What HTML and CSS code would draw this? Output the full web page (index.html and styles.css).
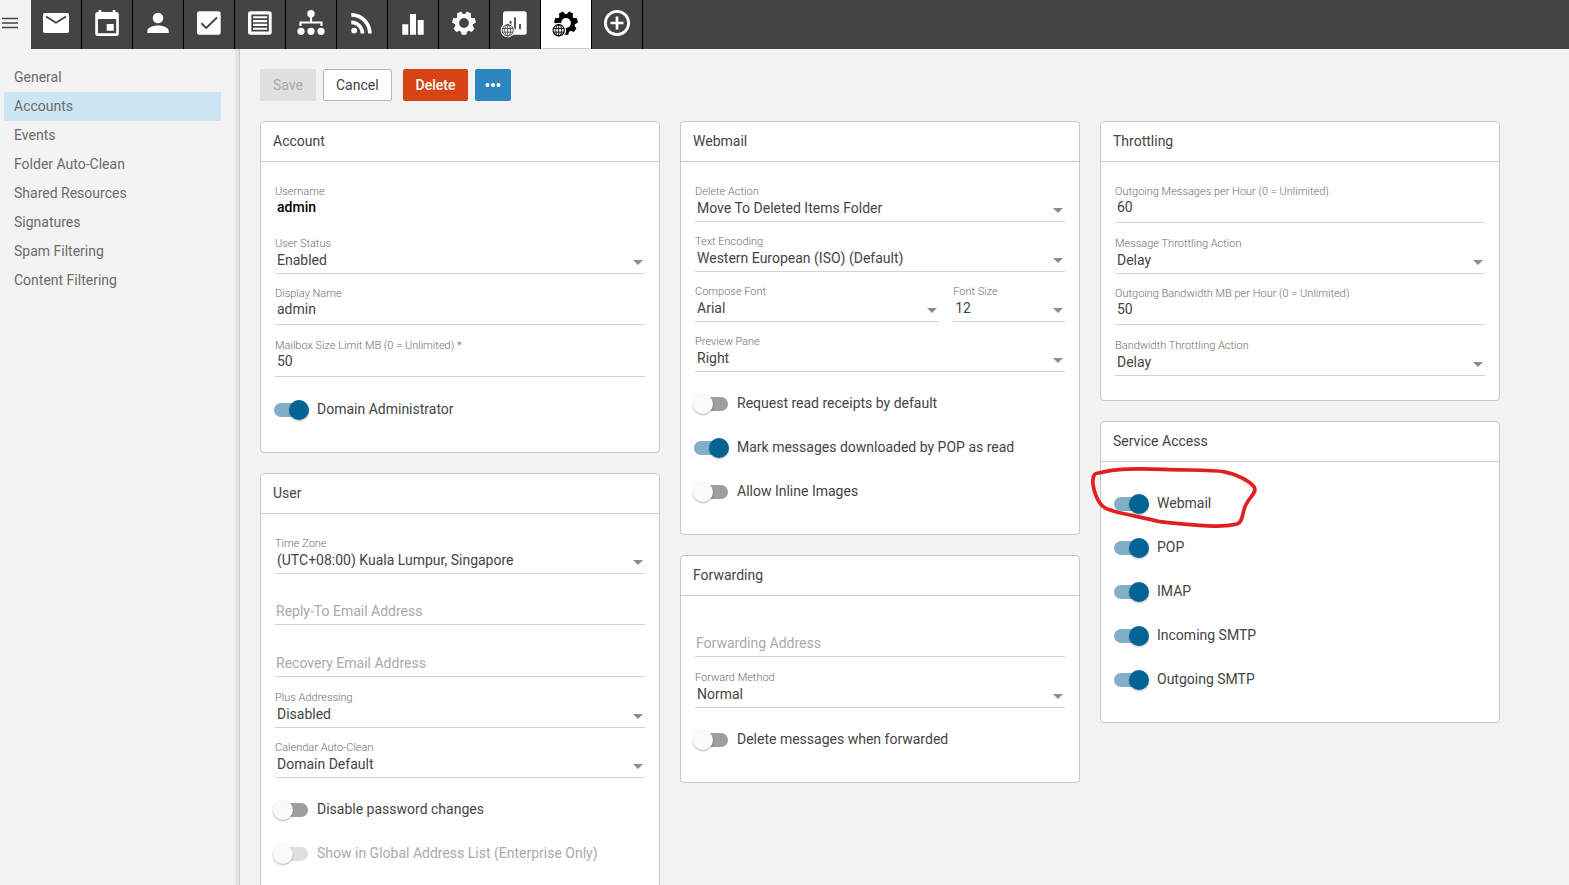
FILE: index.html
```
<!DOCTYPE html>
<html lang="en">
<head>
<meta charset="utf-8">
<title>Accounts - admin</title>
<link rel="stylesheet" href="styles.css">
</head>
<body>
<header class="topbar">
  <button class="menu-button" type="button" aria-label="Menu"><svg class="menu-icon" viewBox="0 0 16 12"><path d="M0 1.500h16M0 6h16M0 10.500h16" stroke="#444" stroke-width="1.500"/></svg></button>
  <nav class="tabs" aria-label="Sections">
    <a class="tab" href="#" aria-label="Email"><svg viewBox="0 0 50 49"><rect x="12" y="13" width="26" height="20" rx="2"/><path class="cut" d="M15 16.500l10 6.200 10-6.200" stroke-width="1.800"/></svg></a>
    <a class="tab" href="#" aria-label="Calendar"><svg viewBox="0 0 50 49"><path fill-rule="evenodd" d="M16.700 10h2.600v2h11.400v-2h2.600v2H34.500a2.300 2.300 0 0 1 2.300 2.300v19.400a2.300 2.300 0 0 1-2.300 2.300h-19a2.300 2.300 0 0 1-2.300-2.300V14.300a2.300 2.300 0 0 1 2.300-2.300h1.200zM16 19v14.300h18.200V19z"/><rect x="24.700" y="24" width="7" height="6.700"/></svg></a>
    <a class="tab" href="#" aria-label="Contacts"><svg viewBox="0 0 50 49"><circle cx="25" cy="18" r="5.300"/><path d="M14.300 33v-2.300c0-3.400 7-5.200 10.700-5.200s10.700 1.800 10.700 5.200V33z"/></svg></a>
    <a class="tab" href="#" aria-label="Tasks"><svg viewBox="0 0 50 49"><rect x="13" y="11.300" width="23.700" height="23.400" rx="2.500"/><path class="cut" d="M17.300 23.300l4.900 4.700 10.800-10.500" stroke-width="1.900"/></svg></a>
    <a class="tab" href="#" aria-label="Notes"><svg viewBox="0 0 50 49"><rect x="13" y="11.300" width="23.700" height="23.400" rx="2.500"/><path class="cut" d="M17.200 15.300h15.800v15.400H17.200zM17 19.200h16M17 23h16M17 26.800h16" stroke-width="1.700"/></svg></a>
    <a class="tab" href="#" aria-label="Domain"><svg viewBox="0 0 50 49"><circle cx="25" cy="13.700" r="3.700"/><circle cx="15" cy="31.300" r="3.600"/><circle cx="25" cy="31.300" r="3.600"/><circle cx="35" cy="31.300" r="3.600"/><path class="line" d="M25 16v6.500M14.500 26v-3.500h21V26" stroke-width="2.200"/></svg></a>
    <a class="tab" href="#" aria-label="RSS feeds"><svg viewBox="0 0 50 49"><g transform="translate(9 7.100) scale(1.320)"><circle cx="6.180" cy="17.820" r="2.180"/><path d="M4 4.440v2.830c7.030 0 12.730 5.700 12.730 12.730h2.830c0-8.590-6.970-15.560-15.560-15.560zm0 5.660v2.830c3.900 0 7.070 3.170 7.070 7.070h2.830c0-5.470-4.430-9.900-9.900-9.900z"/></g></svg></a>
    <a class="tab" href="#" aria-label="Reports"><svg viewBox="0 0 50 49"><path d="M14.300 24.300h6v10.400h-6zM22 14h6v20.700h-6zM29.700 20h6v14.700h-6z"/></svg></a>
    <a class="tab" href="#" aria-label="Settings"><svg viewBox="0 0 50 49"><g transform="translate(25 23)"><circle class="line" r="7" stroke-width="4.200"/><g id="teeth"><path id="tooth" d="M-3.300-8l1.100-3.700h4.400l1.100 3.700z" transform="rotate(180)"/><use href="#tooth" transform="rotate(51.430)"/><use href="#tooth" transform="rotate(102.860)"/><use href="#tooth" transform="rotate(154.290)"/><use href="#tooth" transform="rotate(205.710)"/><use href="#tooth" transform="rotate(257.140)"/><use href="#tooth" transform="rotate(308.570)"/></g></g></svg></a>
    <a class="tab" href="#" aria-label="Domain reports"><svg viewBox="0 0 50 49"><rect x="13" y="11.300" width="23.700" height="23.400" rx="2.500"/><path class="cut" d="M20.500 21v9M25 17.300v12M30 24v5.300" stroke-width="1.800"/><circle cx="17.700" cy="30.300" r="7"/><circle class="cut" cx="17.700" cy="30.300" r="5.600" stroke-width="1"/><path class="cut" d="M17.700 24.700v11.200M12.500 28.500h10.400M12.500 32.200h10.400" stroke-width="0.900"/><ellipse class="cut" cx="17.700" cy="30.300" rx="2.900" ry="5.600" stroke-width="0.900"/></svg></a>
    <a class="tab tab-active" href="#" aria-label="Domain settings" aria-current="page"><svg viewBox="0 0 50 49"><g transform="translate(25 23)"><circle class="line" r="7" stroke-width="4.200"/><use href="#teeth"/></g><circle class="halo" cx="17.700" cy="30.300" r="7.500"/><circle class="line" cx="17.700" cy="30.300" r="5.600" stroke-width="1.200"/><path class="line" d="M17.700 24.700v11.200M12.500 28.500h10.400M12.500 32.200h10.400" stroke-width="0.900"/><ellipse class="line" cx="17.700" cy="30.300" rx="2.900" ry="5.600" stroke-width="0.900"/></svg></a>
    <a class="tab" href="#" aria-label="New"><svg viewBox="0 0 50 49"><circle class="line" cx="25" cy="23" r="11.600" stroke-width="2.800"/><path class="line" d="M18.500 23h13M25 16.500v13" stroke-width="2.700"/></svg></a>
  </nav>
</header>
<div class="shell">
  <nav class="sidebar" aria-label="Settings pages">
    <a class="side-link" href="#">General</a>
    <a class="side-link side-link-active" href="#" aria-current="page">Accounts</a>
    <a class="side-link" href="#">Events</a>
    <a class="side-link" href="#">Folder Auto-Clean</a>
    <a class="side-link" href="#">Shared Resources</a>
    <a class="side-link" href="#">Signatures</a>
    <a class="side-link" href="#">Spam Filtering</a>
    <a class="side-link" href="#">Content Filtering</a>
  </nav>
  <main class="content">
    <div class="actions">
      <button class="button button-save" type="button" disabled>Save</button>
      <button class="button button-cancel" type="button">Cancel</button>
      <button class="button button-delete" type="button">Delete</button>
      <button class="button button-more" type="button" aria-label="More actions"><svg class="more-icon" viewBox="0 0 16 4"><circle cx="2.500" cy="2" r="2"/><circle cx="8" cy="2" r="2"/><circle cx="13.500" cy="2" r="2"/></svg></button>
    </div>
    <div class="columns">
      <div class="column">
        <section class="card">
          <h2 class="card-title">Account</h2>
          <div class="card-body">
            <div class="field field-text"><span class="label">Username</span><strong class="value">admin</strong></div>
            <div class="field"><label class="label" for="status">User Status</label><div class="picker"><select id="status"><option>Enabled</option></select></div></div>
            <div class="field field-text"><label class="label" for="display">Display Name</label><input class="value" id="display" type="text" value="admin"></div>
            <div class="field field-text"><label class="label" for="mailbox">Mailbox Size Limit MB (0 = Unlimited) *</label><input class="value" id="mailbox" type="text" value="50"></div>
            <div class="toggles">
              <label class="toggle"><input type="checkbox" checked><span>Domain Administrator</span></label>
            </div>
          </div>
        </section>
        <section class="card">
          <h2 class="card-title">User</h2>
          <div class="card-body">
            <div class="field"><label class="label" for="zone">Time Zone</label><div class="picker"><select id="zone"><option>(UTC+08:00) Kuala Lumpur, Singapore</option></select></div></div>
            <div class="field field-text field-empty"><input class="value" type="email" aria-label="Reply-To Email Address" placeholder="Reply-To Email Address"></div>
            <div class="field field-text field-empty"><input class="value" type="email" aria-label="Recovery Email Address" placeholder="Recovery Email Address"></div>
            <div class="field"><label class="label" for="plus">Plus Addressing</label><div class="picker"><select id="plus"><option>Disabled</option></select></div></div>
            <div class="field"><label class="label" for="clean">Calendar Auto-Clean</label><div class="picker"><select id="clean"><option>Domain Default</option></select></div></div>
            <div class="toggles">
              <label class="toggle"><input type="checkbox"><span>Disable password changes</span></label>
              <label class="toggle toggle-disabled"><input type="checkbox" disabled><span>Show in Global Address List (Enterprise Only)</span></label>
            </div>
          </div>
        </section>
      </div>
      <div class="column">
        <section class="card">
          <h2 class="card-title">Webmail</h2>
          <div class="card-body">
            <div class="field"><label class="label" for="delaction">Delete Action</label><div class="picker"><select id="delaction"><option>Move To Deleted Items Folder</option></select></div></div>
            <div class="field"><label class="label" for="encoding">Text Encoding</label><div class="picker"><select id="encoding"><option>Western European (ISO) (Default)</option></select></div></div>
            <div class="field-pair">
              <div class="field"><label class="label" for="font">Compose Font</label><div class="picker"><select id="font"><option>Arial</option></select></div></div>
              <div class="field"><label class="label" for="size">Font Size</label><div class="picker"><select id="size"><option>12</option></select></div></div>
            </div>
            <div class="field"><label class="label" for="pane">Preview Pane</label><div class="picker"><select id="pane"><option>Right</option></select></div></div>
            <div class="toggles">
              <label class="toggle"><input type="checkbox"><span>Request read receipts by default</span></label>
              <label class="toggle"><input type="checkbox" checked><span>Mark messages downloaded by POP as read</span></label>
              <label class="toggle"><input type="checkbox"><span>Allow Inline Images</span></label>
            </div>
          </div>
        </section>
        <section class="card">
          <h2 class="card-title">Forwarding</h2>
          <div class="card-body">
            <div class="field field-text field-empty"><input class="value" type="email" aria-label="Forwarding Address" placeholder="Forwarding Address"></div>
            <div class="field"><label class="label" for="method">Forward Method</label><div class="picker"><select id="method"><option>Normal</option></select></div></div>
            <div class="toggles">
              <label class="toggle"><input type="checkbox"><span>Delete messages when forwarded</span></label>
            </div>
          </div>
        </section>
      </div>
      <div class="column">
        <section class="card">
          <h2 class="card-title">Throttling</h2>
          <div class="card-body">
            <div class="field field-text"><label class="label" for="msgs">Outgoing Messages per Hour (0 = Unlimited)</label><input class="value" id="msgs" type="text" value="60"></div>
            <div class="field"><label class="label" for="msgact">Message Throttling Action</label><div class="picker"><select id="msgact"><option>Delay</option></select></div></div>
            <div class="field field-text"><label class="label" for="band">Outgoing Bandwidth MB per Hour (0 = Unlimited)</label><input class="value" id="band" type="text" value="50"></div>
            <div class="field"><label class="label" for="bandact">Bandwidth Throttling Action</label><div class="picker"><select id="bandact"><option>Delay</option></select></div></div>
          </div>
        </section>
        <section class="card">
          <h2 class="card-title">Service Access</h2>
          <div class="card-body">
            <div class="toggles">
              <label class="toggle"><input type="checkbox" checked><span>Webmail</span><svg class="scribble" viewBox="30 165 510 195" aria-hidden="true"><path d="M62 188C100 176 180 175 250 178C320 181 400 179 430 185C465 191 510 212 523 232C532 248 506 262 495 290C486 315 488 335 473 341C450 348 400 350 370 347C330 344 280 340 240 335C200 325 150 316 110 306C75 297 62 290 50 262C38 235 35 207 43 194C46 189 52 190 62 188"/></svg></label>
              <label class="toggle"><input type="checkbox" checked><span>POP</span></label>
              <label class="toggle"><input type="checkbox" checked><span>IMAP</span></label>
              <label class="toggle"><input type="checkbox" checked><span>Incoming SMTP</span></label>
              <label class="toggle"><input type="checkbox" checked><span>Outgoing SMTP</span></label>
            </div>
          </div>
        </section>
      </div>
    </div>
  </main>
</div>
</body>
</html>
```
FILE: styles.css
```
* {
  box-sizing: border-box;
}

body {
  margin: 0;
  height: 100vh;
  display: flex;
  flex-direction: column;
  overflow: hidden;
  background: #f3f3f3;
  color: #444;
  font-family: Roboto, "Liberation Sans", sans-serif;
  font-size: 14px;
  line-height: 20px;
}

button,
input,
select {
  margin: 0;
  font: inherit;
  color: inherit;
}

/* Top bar */
.topbar {
  display: flex;
  flex: none;
  background: #444;
}

.menu-button {
  display: flex;
  align-items: center;
  width: 31px;
  padding: 0 0 3px 2px;
  border: 0;
  background: #f3f3f3;
}

.menu-icon {
  width: 16px;
  height: 12px;
}

.tabs {
  display: flex;
}

.tab {
  width: 51px;
  height: 49px;
  border-right: 1px solid #000;
  color: #fff;
}

.tab svg {
  display: block;
  width: 50px;
  height: 49px;
  fill: currentColor;
}

.tab-active {
  background: #fff;
  color: #000;
  box-shadow: inset 0 -1px #ccc;
}

.tab .cut {
  fill: none;
  stroke: #444;
}

.tab .line {
  fill: none;
  stroke: currentColor;
}

.tab .halo {
  fill: #fff;
}

/* Sidebar */
.shell {
  display: flex;
  flex: 1;
  min-height: 0;
}

.sidebar {
  flex: none;
  width: 240px;
  padding: 14px 18px 0 4px;
  border-right: 1px solid #ccc;
  box-shadow: inset -4px 0 #e4e4e4;
}

.side-link {
  display: block;
  padding: 4px 10px 5px;
  color: #6b6b6b;
  text-decoration: none;
}

.side-link-active {
  background: #cde6f3;
}

/* Content */
.content {
  flex: 1;
  min-width: 0;
  padding: 20px 69px 20px 20px;
  overflow-y: auto;
  scrollbar-width: none;
}

.actions {
  display: flex;
  gap: 7px;
  margin-bottom: 20px;
}

.button {
  height: 32px;
  padding: 0 12px;
  border: 1px solid transparent;
  border-radius: 2px;
}

.button-save {
  background: #e0e0e0;
  color: #aaa;
}

.button-cancel {
  margin-right: 4px;
  background: #fff;
  border-color: #b5b5b5;
}

.button-delete {
  background: #d84315;
  color: #fff;
  font-weight: 500;
}

.button-more {
  display: flex;
  align-items: center;
  padding: 0 9px;
  background: #2e86c1;
}

.more-icon {
  width: 16px;
  height: 4px;
  fill: #fff;
}

.columns {
  display: grid;
  grid-template-columns: repeat(3, minmax(0, 1fr));
  gap: 20px;
  align-items: start;
}

.column {
  display: flex;
  flex-direction: column;
  gap: 20px;
}

.card {
  border: 1px solid #c8c8c8;
  border-radius: 4px;
  background: #fff;
}

.card-title {
  margin: 0;
  padding: 9px 12px 10px;
  border-bottom: 1px solid #c8c8c8;
  font-size: 14px;
  font-weight: 400;
}

.card-body {
  padding: 22px 12px 12px;
}

/* Fields */
.field {
  margin: 0 2px 12px;
}

.label {
  display: block;
  padding-top: 2px;
  color: #6e6e6e;
  font-size: 11px;
  font-weight: 300;
  line-height: 12px;
}

.picker {
  display: grid;
  align-items: center;
  border-bottom: 1px solid #d4d4d4;
}

.picker select {
  grid-area: 1 / 1;
  width: 100%;
  height: 23px;
  padding: 0 20px 3px 2px;
  border: 0;
  background: none;
  appearance: none;
}

.picker::after {
  content: "";
  grid-area: 1 / 1;
  justify-self: end;
  margin: 2px 2px 0 0;
  border: 5px solid transparent;
  border-top-color: #8c8c8c;
  border-bottom: 0;
  pointer-events: none;
}

.field-text {
  margin-bottom: 13px;
}

.value {
  display: block;
  width: 100%;
  height: 25px;
  padding: 0 2px 6px;
  border: 0;
  border-bottom: 1px solid #d4d4d4;
  background: none;
}

strong.value {
  border-color: transparent;
  color: #000;
  font-weight: 500;
  line-height: 18px;
}

.field-empty {
  padding-top: 14px;
}

.field-empty .value {
  padding: 0 1px 2px;
}

.value::placeholder {
  color: #aaa;
}

.field-pair {
  display: grid;
  grid-template-columns: 15fr 7fr;
  column-gap: 10px;
}

/* Switches */
.toggles {
  display: grid;
  gap: 20px;
  padding: 8px 0 18px;
}

.toggle {
  position: relative;
  display: flex;
  align-items: center;
  gap: 8px;
  height: 24px;
}

.toggle span {
  padding-bottom: 2px;
}

.toggle input {
  display: grid;
  flex: none;
  align-items: center;
  width: 36px;
  height: 20px;
  appearance: none;
}

.toggle input::before {
  content: "";
  grid-area: 1 / 1;
  height: 14px;
  margin: 0 1px;
  border-radius: 7px;
  background: #9e9e9e;
}

.toggle input::after {
  content: "";
  grid-area: 1 / 1;
  width: 20px;
  height: 20px;
  border-radius: 10px;
  background: #fafafa;
  box-shadow: 0 1px 2px rgba(0, 0, 0, 0.3);
}

.toggle input:checked::before {
  background: #80b0c8;
}

.toggle input:checked::after {
  justify-self: end;
  background: #006595;
}

.toggle-disabled {
  color: #aaa;
}

.toggle-disabled input::before {
  background: #e0e0e0;
}

.scribble {
  position: absolute;
  left: -23px;
  top: -27px;
  width: 170px;
  height: 65px;
  fill: none;
  stroke: #e02020;
  stroke-width: 11;
  pointer-events: none;
}
```
